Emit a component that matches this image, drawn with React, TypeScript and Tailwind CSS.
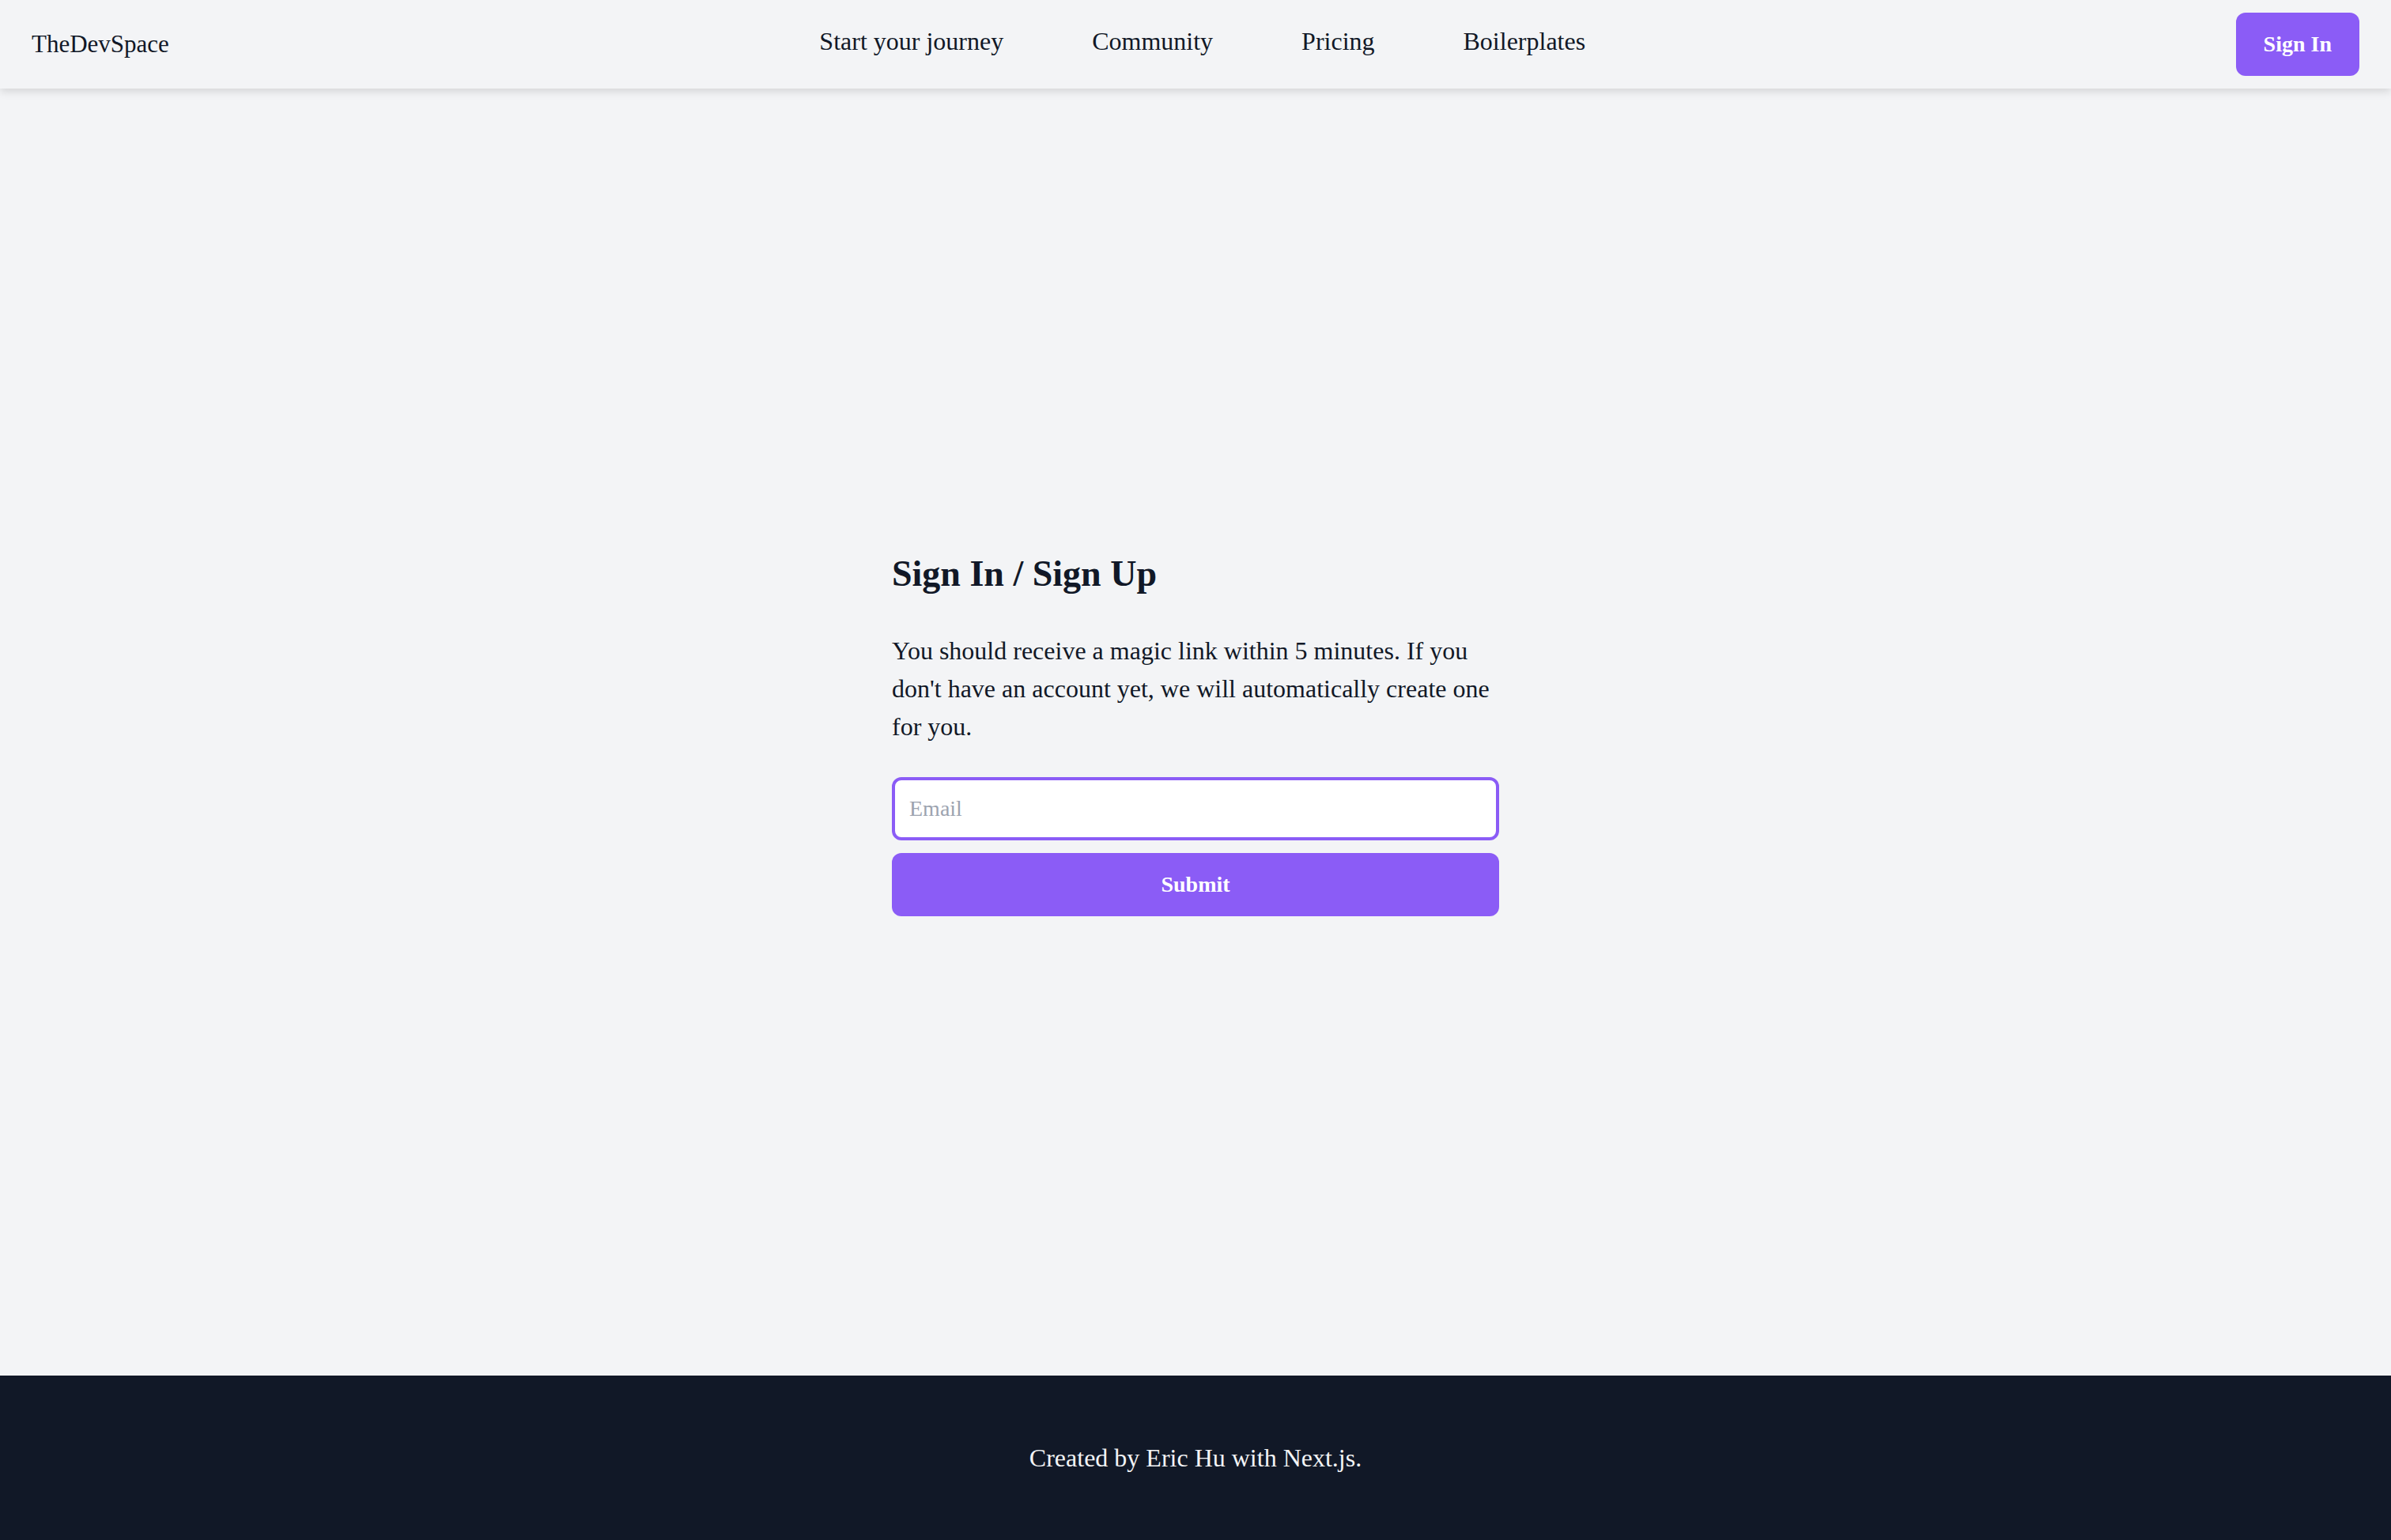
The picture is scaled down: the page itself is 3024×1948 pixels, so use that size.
import React, { useState } from 'react';

const navLinks = ['Start your journey', 'Community', 'Pricing', 'Boilerplates'];

const App = () => {
  const [email, setEmail] = useState('');

  return (
    <div
      className="min-h-screen flex flex-col bg-[#f3f4f6] text-[#111827]"
      style={{ fontFamily: '"Liberation Serif", "Times New Roman", serif' }}
    >
      {/* Header */}
      <header className="h-[112px] px-[40px] flex items-center justify-between bg-[#f3f4f6] shadow-[0_4px_10px_rgba(0,0,0,0.12)] relative z-10">
        <a className="text-[31px] leading-[40px] text-[#111827]">TheDevSpace</a>

        <nav className="flex items-center gap-[112px] pb-[8px]">
          {navLinks.map((link) => (
            <a key={link} className="text-[32px] leading-[40px] text-[#111827]">
              {link}
            </a>
          ))}
        </nav>

        <button className="h-[80px] px-[35px] rounded-[12px] bg-[#8b5cf6] text-white text-[28px] font-bold">
          Sign In
        </button>
      </header>

      {/* Main */}
      <main className="flex-1 flex items-center justify-center">
        <div className="w-[768px]">
          <h1 className="text-[46px] leading-[64px] font-bold text-[#111827]">Sign In / Sign Up</h1>
          <p className="mt-[41px] text-[32px] leading-[48px] text-[#111827]">
            You should receive a magic link within 5 minutes. If you don't have an account yet, we will
            automatically create one for you.
          </p>

          <form className="mt-[40px] flex flex-col gap-[16px]" onSubmit={(e) => e.preventDefault()}>
            <input
              type="email"
              value={email}
              onChange={(e) => setEmail(e.target.value)}
              placeholder="Email"
              className="h-[80px] w-full rounded-[12px] border-[4px] border-[#8b5cf6] bg-white px-[18px] text-[28px] text-[#111827] placeholder:text-[#9ca3af] outline-none"
            />
            <button
              type="submit"
              className="h-[80px] w-full rounded-[12px] bg-[#8b5cf6] text-white text-[28px] font-bold"
            >
              Submit
            </button>
          </form>
        </div>
      </main>

      {/* Footer */}
      <footer className="h-[208px] flex items-center justify-center bg-[#111827]">
        <p className="text-[32px] leading-[48px] text-[#f3f4f6]">Created by Eric Hu with Next.js.</p>
      </footer>
    </div>
  );
};

export default App;
